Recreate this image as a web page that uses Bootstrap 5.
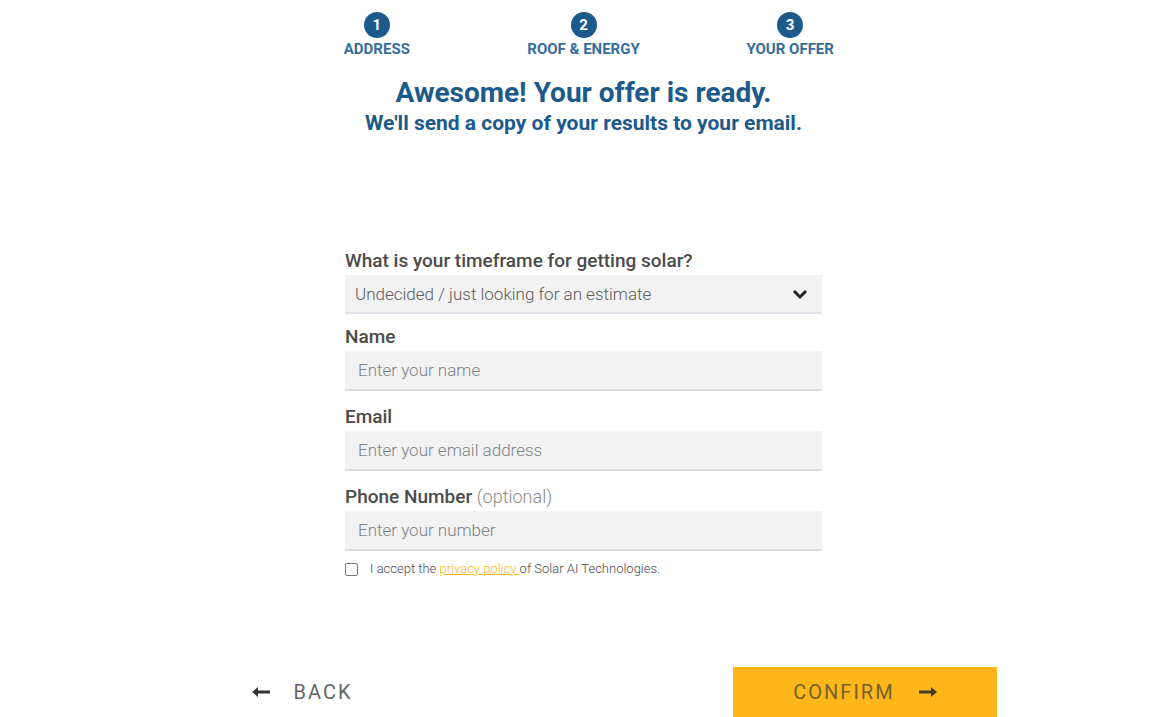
<!DOCTYPE html>
<html lang="en">
<head>
<meta charset="utf-8">
<meta name="viewport" content="width=device-width, initial-scale=1">
<title>Your solar offer</title>
<link href="https://cdn.jsdelivr.net/npm/bootstrap@5.3.0/dist/css/bootstrap.min.css" rel="stylesheet">
<style>
  body { font-family: Roboto, "Liberation Sans", sans-serif; color: #4b4b4b; background: #fff; }
  .brand { color: #1d5a8c; }
  .steps { max-width: 620px; }
  .step-label { font-size: 15px; line-height: 22px; font-weight: 700; color: #376d9a; }
  .step-dot { width: 26px; height: 26px; font-size: 15px; background: #1d5a8c; }
  .offer-title { font-size: 28px; line-height: 34px; font-weight: 700; }
  .offer-sub { font-size: 21px; line-height: 26px; font-weight: 700; }
  .offer-form { max-width: 477px; padding-top: 111px; }
  .field { margin-bottom: 12px; }
  .field .form-label { font-size: 19px; line-height: 28px; font-weight: 500; margin: 0; display: block; }
  .field .optional { font-size: 18px; font-weight: 300; color: #8a8a8a; }
  .field .form-control, .field .form-select {
    height: 40px; font-size: 17px; line-height: 24px; font-weight: 300; padding: 6px 13px;
    background-color: #f2f2f2; border: 0; border-bottom: 2px solid #dcdddf; border-radius: 0;
  }
  .field .form-select {
    height: 39px; color: #5c5c5c; padding-left: 10px; border-bottom-color: #e0e3e9;
    background-image: url("data:image/svg+xml,%3Csvg xmlns='http://www.w3.org/2000/svg' viewBox='0 0 16 16'%3E%3Cpath fill='none' stroke='%23222' stroke-width='3' d='m2 5 6 6 6-6'/%3E%3C/svg%3E");
    background-size: 16px 16px; background-position: right 14px center;
  }
  .field-select { margin-bottom: 9px; }
  .field .form-control::placeholder { color: #7b8288; opacity: 1; }
  .policy { font-size: 13px; line-height: 20px; font-weight: 300; }
  .policy .form-check-input { width: 13px; height: 13px; margin: 0; border: 1px solid #777; border-radius: 2px; }
  .policy a { color: #fdb515; }
  .actions { max-width: 827px; padding-top: 88px; }
  .action { width: 264px; height: 50px; font-size: 20px; line-height: 24px; letter-spacing: 2px; border: 0; border-radius: 0; color: #666; }
  .action-confirm, .action-confirm:hover { background: #fdb71a; color: #75612b; }
</style>
</head>
<body>
<main class="container-fluid px-3">
  <ol class="steps row g-0 list-unstyled mx-auto mb-0 pt-2 text-center brand">
    <li class="col d-flex flex-column align-items-center pt-1"><span class="step-dot rounded-circle text-white fw-bold d-flex align-items-center justify-content-center">1</span><span class="step-label">ADDRESS</span></li>
    <li class="col d-flex flex-column align-items-center pt-1"><span class="step-dot rounded-circle text-white fw-bold d-flex align-items-center justify-content-center">2</span><span class="step-label">ROOF &amp; ENERGY</span></li>
    <li class="col d-flex flex-column align-items-center pt-1"><span class="step-dot rounded-circle text-white fw-bold d-flex align-items-center justify-content-center">3</span><span class="step-label">YOUR OFFER</span></li>
  </ol>
  <header class="text-center brand pt-3">
    <h1 class="offer-title m-0">Awesome! Your offer is ready.</h1>
    <p class="offer-sub m-0">We'll send a copy of your results to your email.</p>
  </header>
  <form>
    <div class="offer-form mx-auto">
      <div class="field field-select">
        <label class="form-label" for="timeframe">What is your timeframe for getting solar?</label>
        <select class="form-select" id="timeframe"><option>Undecided / just looking for an estimate</option></select>
      </div>
      <div class="field">
        <label class="form-label" for="name">Name</label>
        <input class="form-control" type="text" id="name" placeholder="Enter your name">
      </div>
      <div class="field">
        <label class="form-label" for="email">Email</label>
        <input class="form-control" type="email" id="email" placeholder="Enter your email address">
      </div>
      <div class="field mb-2">
        <label class="form-label" for="phone">Phone Number <span class="optional">(optional)</span></label>
        <input class="form-control" type="tel" id="phone" placeholder="Enter your number">
      </div>
      <div class="policy d-flex align-items-center">
        <input class="form-check-input" type="checkbox" id="accept">
        <label class="ps-2 ms-1" for="accept">I accept the <a href="#">privacy policy </a>of Solar AI Technologies.</label>
      </div>
    </div>
    <div class="actions mx-auto d-flex justify-content-between">
      <button type="button" class="action btn d-flex align-items-center justify-content-center gap-4">
        <svg width="18" height="10" viewBox="0 0 18 10" aria-hidden="true"><path d="M0 5 6 0v3.500h12v3H6V10z" fill="#333"/></svg>
        BACK
      </button>
      <button type="submit" class="action action-confirm btn d-flex align-items-center justify-content-center gap-4">
        CONFIRM
        <svg width="18" height="10" viewBox="0 0 18 10" aria-hidden="true"><path d="M18 5 12 0v3.500H0v3h12V10z" fill="#443c28"/></svg>
      </button>
    </div>
  </form>
</main>
<script src="https://cdn.jsdelivr.net/npm/bootstrap@5.3.0/dist/js/bootstrap.bundle.min.js"></script>
</body>
</html>
